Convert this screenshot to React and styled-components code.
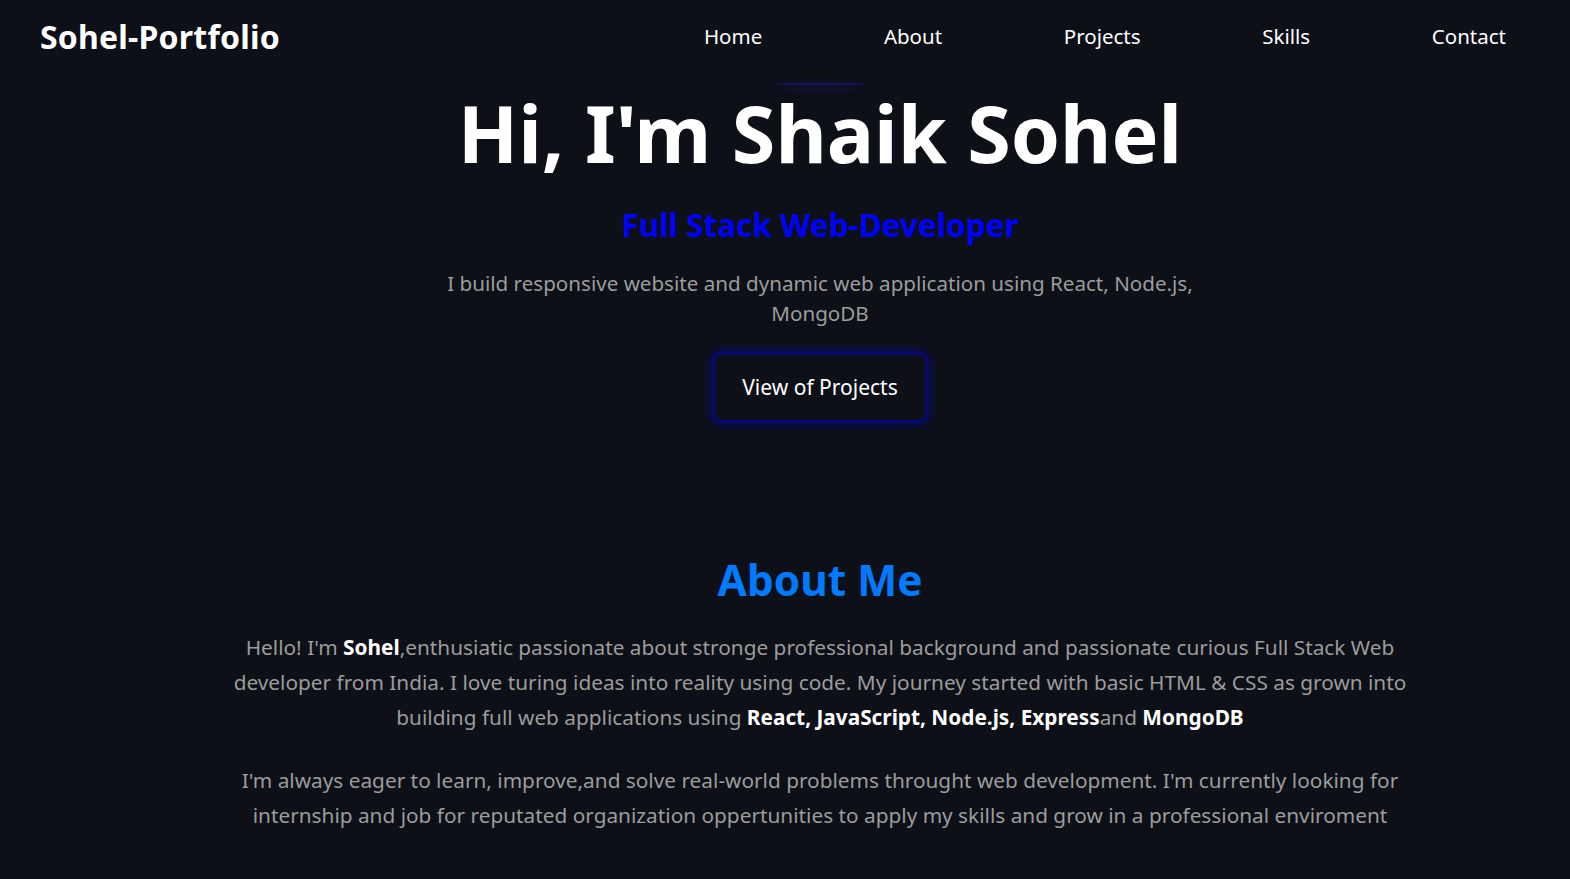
import React from "react";
import styled, { createGlobalStyle } from "styled-components";

const GlobalStyle = createGlobalStyle`
  * {
    box-sizing: border-box;
  }
  body {
    margin: 0;
    background-color: #0d1017;
    color: #ffffff;
    font-family: "Noto Sans", "Open Sans", sans-serif;
  }
`;

const Page = styled.div`
  min-height: 879px;
  background-color: #0d1017;
`;

const NavBar = styled.nav`
  display: flex;
  justify-content: space-between;
  align-items: center;
  height: 74px;
  padding: 0 64px 2px 40px;
`;

const Logo = styled.div`
  font-size: 32px;
  font-weight: 700;
  color: #ffffff;
  letter-spacing: 0.2px;
`;

const NavLinks = styled.ul`
  display: flex;
  align-items: center;
  gap: 121.7px;
  list-style: none;
  margin: 0;
  padding: 0;
`;

const NavLink = styled.li`
  font-size: 20.5px;
  color: #ffffff;
  cursor: pointer;
`;

const Main = styled.main`
  padding-left: 70px;
`;

const Hero = styled.section`
  display: flex;
  flex-direction: column;
  align-items: center;
  text-align: center;
  padding-top: 9px;
`;

const Glow = styled.div`
  width: 90px;
  height: 2px;
  border-radius: 50%;
  background-color: rgba(35, 35, 170, 0.45);
  box-shadow: 0 2px 8px 2px rgba(25, 25, 140, 0.35);
`;

const Title = styled.h1`
  margin: 8px 0 0 0;
  font-size: 79px;
  font-weight: 700;
  line-height: 1;
  color: #ffffff;
`;

const SubTitle = styled.h2`
  margin: 34px 0 0 0;
  font-size: 31.5px;
  font-weight: 700;
  line-height: 1.2;
  color: #0000ff;
`;

const HeroText = styled.p`
  max-width: 780px;
  margin: 24px 0 0 0;
  font-size: 20.6px;
  line-height: 30px;
  color: #9c9c9c;
`;

const Button = styled.button`
  margin-top: 25px;
  padding: 0 27px;
  height: 69px;
  font-family: inherit;
  font-size: 21px;
  color: #ffffff;
  background-color: #0d1017;
  border: 2px solid #08087e;
  border-radius: 8px;
  box-shadow: 0 0 9px 2px rgba(0, 0, 200, 0.6);
  cursor: pointer;
`;

const About = styled.section`
  display: flex;
  flex-direction: column;
  align-items: center;
  text-align: center;
  margin-top: 132px;
`;

const SectionTitle = styled.h2`
  margin: 0;
  font-size: 42.4px;
  font-weight: 700;
  line-height: 51px;
  color: #007bff;
`;

const AboutText = styled.p`
  max-width: 1200px;
  margin: ${({ $first }) => ($first ? "25px 0 0 0" : "28px 0 0 0")};
  font-size: 20.8px;
  line-height: 35px;
  color: #9c9c9c;
`;

const Strong = styled.strong`
  color: #ffffff;
  font-weight: 700;
`;

const links = ["Home", "About", "Projects", "Skills", "Contact"];

function App() {
  return (
    <Page>
      <GlobalStyle />
      <NavBar>
        <Logo>Sohel-Portfolio</Logo>
        <NavLinks>
          {links.map((l) => (
            <NavLink key={l}>{l}</NavLink>
          ))}
        </NavLinks>
      </NavBar>
      <Main>
        <Hero>
          <Glow />
          <Title>Hi, I'm Shaik Sohel</Title>
          <SubTitle>Full Stack Web-Developer</SubTitle>
          <HeroText>
            I build responsive website and dynamic web application using React,
            Node.js, MongoDB
          </HeroText>
          <Button>View of Projects</Button>
        </Hero>
        <About>
          <SectionTitle>About Me</SectionTitle>
          <AboutText $first>
            Hello! I'm <Strong>Sohel</Strong>,enthusiatic passionate about
            stronge professional background and passionate curious Full Stack
            Web developer from India. I love turing ideas into reality using
            code. My journey started with basic HTML &amp; CSS as grown into
            building full web applications using{" "}
            <Strong>React, JavaScript, Node.js, Express</Strong>and{" "}
            <Strong>MongoDB</Strong>
          </AboutText>
          <AboutText>
            I'm always eager to learn, improve,and solve real-world problems
            throught web development. I'm currently looking for internship and
            job for reputated organization oppertunities to apply my skills and
            grow in a professional enviroment
          </AboutText>
        </About>
      </Main>
    </Page>
  );
}

export default App;
